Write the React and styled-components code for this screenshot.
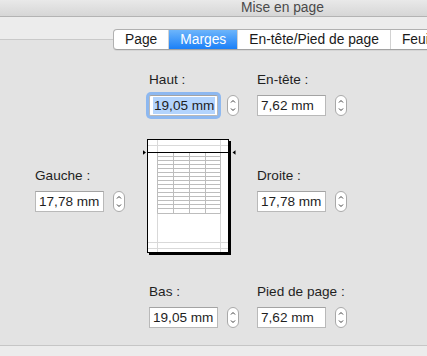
import React from 'react';
import styled, { createGlobalStyle } from 'styled-components';

const GlobalStyle = createGlobalStyle`
  html, body {
    margin: 0;
    padding: 0;
  }
  body {
    background: #e3e3e3;
    font-family: "Liberation Sans", Arial, sans-serif;
    color: #1f1f1f;
  }
`;

const tabs = ['Page', 'Marges', 'En-tête/Pied de page', 'Feuille'];

const Stepper = () => (
  <StepperSvg width="12" height="21" viewBox="0 0 12 21">
    <rect x="0.5" y="0.5" width="11" height="20" rx="5.5" fill="#fff" stroke="#a9a9a9" />
    <path d="M4 7.5 L6 5.5 L8 7.5" fill="none" stroke="#3a3a3a" strokeWidth="1" />
    <path d="M4 13.5 L6 15.5 L8 13.5" fill="none" stroke="#3a3a3a" strokeWidth="1" />
  </StepperSvg>
);

const Field = ({ label, value, focused, className }) => (
  <FieldWrap className={className}>
    <Label>{label}</Label>
    <InputRow>
      <TextBox $focused={focused}>
        {focused ? <Selected>{value}</Selected> : value}
      </TextBox>
      <Stepper />
    </InputRow>
  </FieldWrap>
);

const PagePreview = () => {
  const rows = [];
  for (let y = 17.5; y < 73; y += 4) rows.push(y);
  return (
    <PreviewSvg width="93" height="117" viewBox="0 0 93 117">
      <rect x="6" y="2" width="82" height="114" fill="#000" />
      <rect x="4.5" y="0.5" width="81" height="113" fill="#fff" stroke="#000" />
      <g stroke="#d9d9d9" strokeWidth="1">
        <line x1="14.5" y1="1" x2="14.5" y2="113" />
        <line x1="77.5" y1="1" x2="77.5" y2="113" />
        <line x1="5" y1="6.5" x2="85" y2="6.5" />
        <line x1="5" y1="103.5" x2="85" y2="103.5" />
        <line x1="5" y1="109.5" x2="85" y2="109.5" />
      </g>
      <g stroke="#bdbdbd" strokeWidth="1">
        {rows.map(y => (
          <line key={y} x1="14.5" y1={y} x2="77.5" y2={y} />
        ))}
        <line x1="14.5" y1="74.5" x2="77.5" y2="74.5" />
        {[14.5, 30.5, 46.5, 62.5, 77.5].map(x => (
          <line key={x} x1={x} y1="13" x2={x} y2="74.5" />
        ))}
      </g>
      <line x1="5" y1="13.5" x2="85" y2="13.5" stroke="#000" strokeWidth="1.2" />
      <polygon points="0,11.2 3,13.5 0,15.8" fill="#000" />
      <polygon points="92.5,11.2 89.5,13.5 92.5,15.8" fill="#000" />
    </PreviewSvg>
  );
};

const App = () => (
  <>
    <GlobalStyle />
    <Window>
      <TitleBar>Mise en page</TitleBar>
      <TabRow>
        <TabGroup>
          {tabs.map(t => (
            <Tab key={t} $active={t === 'Marges'}>
              {t}
            </Tab>
          ))}
        </TabGroup>
      </TabRow>
      <Panel>
        <MarginGrid>
          <AreaField label="Haut :" value="19,05 mm" focused $area="top" />
          <AreaField label="En-tête :" value="7,62 mm" $area="head" />
          <MidField label="Gauche :" value="17,78 mm" $area="left" />
          <PreviewCell>
            <PagePreview />
          </PreviewCell>
          <MidField label="Droite :" value="17,78 mm" $area="right" />
          <AreaField label="Bas :" value="19,05 mm" $area="bottom" />
          <AreaField label="Pied de page :" value="7,62 mm" $area="foot" />
        </MarginGrid>
      </Panel>
    </Window>
  </>
);

export default App;

const Window = styled.div`
  width: 427px;
  height: 356px;
  overflow: hidden;
  display: flex;
  flex-direction: column;
  background: #ececec;
`;

const TitleBar = styled.div`
  height: 16px;
  line-height: 16px;
  padding-left: 241px;
  font-size: 13.8px;
  color: #4a4a4a;
  background: linear-gradient(#e9e9e9, #d6d6d6);
  border-bottom: 1px solid #b3b3b3;
  white-space: nowrap;
`;

const TabRow = styled.div`
  position: relative;
  z-index: 1;
  display: flex;
  margin-top: 12px;
  margin-bottom: -11px;
  padding-left: 113px;
`;

const TabGroup = styled.div`
  display: flex;
  flex-shrink: 0;
  background: #fff;
  border: 1px solid #b0b0b0;
  border-bottom-color: #a2a2a2;
  border-radius: 4px 0 0 4px;
  overflow: hidden;
  box-shadow: 0 1px 0 rgba(0, 0, 0, 0.06);
`;

const Tab = styled.div`
  flex-shrink: 0;
  height: 19px;
  line-height: 19px;
  padding: 0 11px;
  font-size: 13.8px;
  white-space: nowrap;
  color: ${p => (p.$active ? '#fff' : '#1a1a1a')};
  background: ${p => (p.$active ? 'linear-gradient(#6db5fb, #1b80f8)' : 'transparent')};

  & + & {
    border-left: 1px solid #d2d2d2;
  }
`;

const Panel = styled.div`
  height: 305px;
  background: #e3e3e3;
  border-top: 1px solid #c9c9c9;
  border-bottom: 1px solid #c6c6c6;
  flex-shrink: 0;
`;

const MarginGrid = styled.div`
  display: grid;
  grid-template-columns: 114px 108px 1fr;
  grid-template-rows: 44px 23px 117px 28px 44px;
  grid-template-areas:
    '. top head'
    '. . .'
    'left preview right'
    '. . .'
    '. bottom foot';
  padding: 32px 0 0 35px;
`;

const FieldWrap = styled.div`
  display: flex;
  flex-direction: column;
  gap: 7px;
`;

const AreaField = styled(Field)`
  grid-area: ${p => p.$area};
`;

const MidField = styled(Field)`
  grid-area: ${p => p.$area};
  align-self: start;
  margin-top: 29px;
`;

const Label = styled.div`
  font-size: 13.6px;
  line-height: 16px;
  color: #1f1f1f;
  white-space: nowrap;
`;

const InputRow = styled.div`
  display: flex;
  align-items: center;
  gap: 9px;
`;

const TextBox = styled.div`
  box-sizing: border-box;
  width: 69px;
  height: 21px;
  padding: 0 3px;
  display: flex;
  align-items: center;
  font-size: 13.6px;
  white-space: nowrap;
  overflow: hidden;
  background: #fff;
  border: 1px solid #b9b9b9;
  border-top-color: #a3a3a3;
  box-shadow: ${p => (p.$focused ? '0 0 0 3px #8db8f0' : 'none')};
  border-radius: ${p => (p.$focused ? '2px' : '0')};
`;

const Selected = styled.span`
  background: #b3d4fd;
  padding: 1px 1px;
`;

const StepperSvg = styled.svg`
  display: block;
  flex-shrink: 0;
`;

const PreviewCell = styled.div`
  grid-area: preview;
  margin-left: -6px;
`;

const PreviewSvg = styled.svg`
  display: block;
`;
